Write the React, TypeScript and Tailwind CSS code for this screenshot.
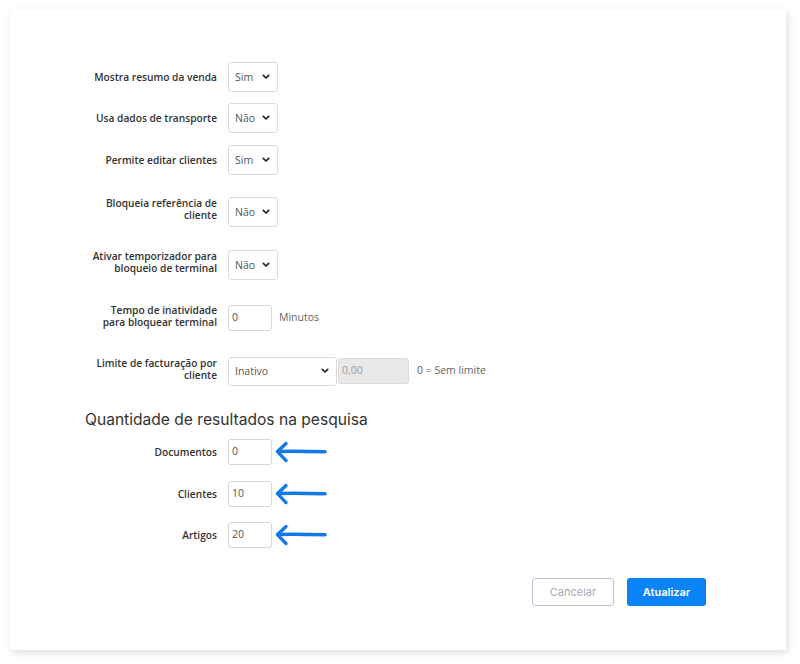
import React from "react";

const label = "w-[132px] shrink-0 text-right text-[10.2px] leading-[12px] font-semibold text-[#333]";
const body = { fontFamily: '"Open Sans", "Liberation Sans", sans-serif' };
const poppins = { fontFamily: 'Inter, "Noto Sans", sans-serif' };

function Chevron() {
  return (
    <svg width="8" height="6" viewBox="0 0 8 6" className="shrink-0">
      <path d="M1.3 1.3 L4 4 L6.7 1.3" fill="none" stroke="#222" strokeWidth="1.7" strokeLinecap="round" strokeLinejoin="round" />
    </svg>
  );
}

function Sel({ value, w = "w-[50px]", h = "h-[30px]" }: { value: string; w?: string; h?: string }) {
  return (
    <div className={`${w} ${h} flex items-center justify-between pl-[6px] pr-[7px] border border-[#dcdcdc] rounded-[3px] bg-white text-[10.5px] text-[#555]`}>
      <span className="pt-[1px]">{value}</span>
      <Chevron />
    </div>
  );
}

function Inp({ value }: { value: string }) {
  return (
    <div className="w-[44px] h-[26px] flex items-center pl-[3px] border border-[#d6d6d6] rounded-[3px] bg-white text-[10.5px] text-[#555]">
      {value}
    </div>
  );
}

function Arrow() {
  return (
    <svg width="54" height="22" viewBox="0 0 54 22" className="ml-[-9px]">
      <path d="M4 10.5 C18 10 34 10.3 51 10.8" fill="none" stroke="#1479e6" strokeWidth="3.6" strokeLinecap="round" />
      <path d="M12 2.5 C9 5.5 6 8.3 3.5 10.5 C6 13.5 9 16.5 12 19.5" fill="none" stroke="#1479e6" strokeWidth="3.4" strokeLinecap="round" strokeLinejoin="round" />
    </svg>
  );
}

function Row({ children, className = "" }: { children: React.ReactNode; className?: string }) {
  return <div className={`flex items-center gap-[11px] h-[30px] ${className}`}>{children}</div>;
}

export default function App() {
  return (
    <div className="w-[800px] h-[664px] bg-white pt-[9px] pl-[10px]" style={body}>
      <div className="w-[776px] h-[641px] bg-white shadow-[2px_3px_8px_rgba(0,0,0,0.13)] pt-[53px] pl-[75px] flex flex-col">
        <Row>
          <div className={label}>Mostra resumo da venda</div>
          <Sel value="Sim" />
        </Row>
        <Row className="mt-[11px]">
          <div className={label}>Usa dados de transporte</div>
          <Sel value="Não" />
        </Row>
        <Row className="mt-[12px]">
          <div className={label}>Permite editar clientes</div>
          <Sel value="Sim" />
        </Row>
        <Row className="mt-[22px]">
          <div className={`${label} -mt-[6px]`}>Bloqueia referência de cliente</div>
          <Sel value="Não" />
        </Row>
        <Row className="mt-[23px]">
          <div className={`${label} -mt-[6px]`}>Ativar temporizador para bloqueio de terminal</div>
          <Sel value="Não" />
        </Row>
        <Row className="mt-[23px]">
          <div className={`${label} -mt-[4px]`}>
            Tempo de inatividade
            <br />
            para bloquear terminal
          </div>
          <Inp value="0" />
          <span className="ml-[-4px] text-[10.5px] text-[#666]">Minutos</span>
        </Row>
        <Row className="mt-[23px]">
          <div className={`${label} -mt-[4px]`}>Limite de facturação por cliente</div>
          <div className="flex items-center gap-[1px]">
            <Sel value="Inativo" w="w-[109px]" h="h-[29px]" />
            <div className="w-[71px] h-[26px] flex items-center pl-[3px] border border-[#dcdcdc] rounded-[3px] bg-[#e9e9e9] text-[10.5px] text-[#999]">
              0,00
            </div>
            <span className="ml-[7px] text-[10.5px] text-[#666]">0 = Sem limite</span>
          </div>
        </Row>
        <h2 className="mt-[22px] text-[15.6px] leading-[24px] font-normal text-[#333]" style={poppins}>
          Quantidade de resultados na pesquisa
        </h2>
        <Row className="mt-[5px]">
          <div className={label}>Documentos</div>
          <Inp value="0" />
          <Arrow />
        </Row>
        <Row className="mt-[12px]">
          <div className={label}>Clientes</div>
          <Inp value="10" />
          <Arrow />
        </Row>
        <Row className="mt-[11px]">
          <div className={label}>Artigos</div>
          <Inp value="20" />
          <Arrow />
        </Row>
        <div className="mt-[28px] flex justify-end gap-[13px] mr-[80px]" style={poppins}>
          <button className="w-[82px] h-[28px] border border-[#bcc4d4] rounded-[3px] bg-white text-[11px] text-[#a3acbd]">
            Cancelar
          </button>
          <button className="w-[79px] h-[28px] rounded-[3px] bg-[#0a84f4] text-[11px] font-semibold text-white">
            Atualizar
          </button>
        </div>
      </div>
    </div>
  );
}
